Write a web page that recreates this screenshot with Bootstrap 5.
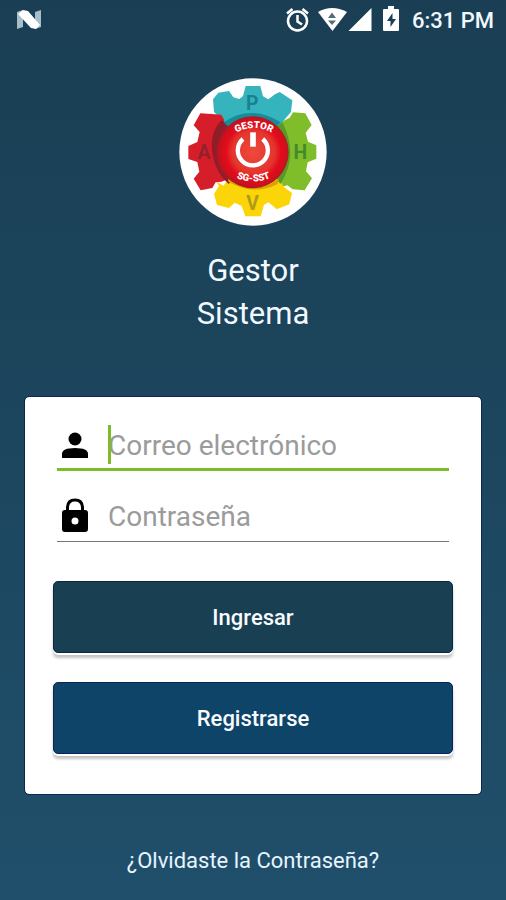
<!DOCTYPE html>
<html lang="es">
<head>
<meta charset="utf-8">
<meta name="viewport" content="width=device-width, initial-scale=1">
<title>Gestor Sistema</title>
<link href="https://cdn.jsdelivr.net/npm/bootstrap@5.3.0/dist/css/bootstrap.min.css" rel="stylesheet">
<style>
body { font-family: Roboto, "Liberation Sans", sans-serif; background: linear-gradient(#1a3f54, #1c465e 50%, #204f6b); color: #f1f8ff; }
.status-bar { height: 40px; padding: 0 12px 0 16px; }
.clock-text { font-size: 22px; font-weight: 500; line-height: 26px; padding-top: 2px; margin-left: 11px; }
.brand { padding-top: 38px; }
.brand-name { font-size: 31px; line-height: 43px; font-weight: 400; margin: 23px 0 0; }
.login-panel { margin: 61px 24px 0; padding: 26px 28px 40px; border: 1px solid #0c2850; border-radius: 5px; background: #fff; background-clip: padding-box; }
.field { margin: 0 4px; height: 48px; border-bottom: 1px solid #777; padding-left: 4px; }
.field-active { border-bottom: 3px solid #7dbb2b; }
.field + .field { margin-top: 23px; }
.field-icon { width: 30px; margin-right: 17px; padding-top: 2px; }
.field-icon svg { display: block; }
.field-input { font-family: inherit; font-size: 28px; line-height: 38px; padding: 4px 0 0; border: 0; outline: 0; background: transparent; width: 100%; min-width: 0; color: #333; caret-color: transparent; }
.field-input::placeholder { color: #9b9b9b; opacity: 1; }
.caret { left: 0; top: 2px; width: 3px; height: 39px; background: #7dbb2b; }
.action { height: 72px; width: 100%; font-size: 22px; font-weight: 500; color: #f8fbff; border: 1px solid #0b2448; border-radius: 5px; box-shadow: 0 2px 0 #fff, 0 5px 3px #c3c3c3; }
.action:hover { color: #fff; }
.action-enter, .action-enter:hover { background: #183f52; border-color: #0b2448; margin-top: 39px; }
.action-register, .action-register:hover { background: #0e4467; border-color: #08245a; margin-top: 29px; }
.forgot { font-size: 22px; line-height: 30px; color: #e6f5ff; padding: 51px 0 24px; }
</style>
<script src="https://cdn.jsdelivr.net/npm/bootstrap@5.3.0/dist/js/bootstrap.bundle.min.js"></script>
</head>
<body class="min-vh-100 d-flex flex-column">
<header class="status-bar d-flex align-items-center justify-content-between">
  <svg width="26" height="22" viewBox="0 0 26 22" aria-hidden="true">
    <path d="M1 3l6-2v17l-6 2zM19 3l6-2v17l-6 2z" fill="#a9bdc8"/>
    <path d="M2 5 7 1l5 1 12 14-4 4-5-1z" fill="#fff"/>
  </svg>
  <div class="d-flex align-items-center">
    <svg width="116" height="28" viewBox="286 6 116 28" aria-hidden="true">
      <g fill="none" stroke="#fff" stroke-width="2.500">
        <circle cx="298.500" cy="21" r="9.500"/>
        <path d="M298.500 15v6.500l4.500 3M288 13.500l5.500-4.500M309 13.500l-5.500-4.500"/>
      </g>
      <path d="M319 12Q333 4 348 12L333.500 31z" fill="#fff"/>
      <path d="M333 12.500l4 5.500h-8zM329 20.500h8l-4 4.500z" fill="#566b78"/>
      <path d="M349.500 31 372.500 8v23z" fill="#fff"/>
      <path d="M389 9V6h6v3h4q1 0 1 1v20q0 1-1 1h-14q-1 0-1-1V10q0-1 1-1z" fill="#fff"/>
      <path d="M393.500 13v6h3.500l-5.500 8v-6H388z" fill="#1a3f54"/>
    </svg>
    <span class="clock-text">6:31 PM</span>
  </div>
</header>

<main>
  <section class="brand text-center">
    <svg class="d-block mx-auto" width="148" height="148" viewBox="30 24 444 444" role="img" aria-label="Gestor SG-SST">
      <defs>
        <radialGradient id="redButton"><stop offset="0" stop-color="#ef493c"/><stop offset=".62" stop-color="#e3352e"/><stop offset=".8" stop-color="#e40b1b"/><stop offset="1" stop-color="#ca111c"/></radialGradient>
        <path id="arcTop" d="M188 196Q254 152 322 196"/>
        <path id="arcBottom" d="M189 317Q253 352 318 317"/>
      </defs>
      <circle cx="252" cy="246" r="221" fill="#fff"/>
      <path d="M160 151 135 126 132 88 148 68 180 63 193 82 211 87 222 78 230 48H274L282 79 298 88 318 73 332 66 370 91 366 126 343 153 336 182H164z" fill="#35b4bd"/>
      <path d="M343 153 362 143 372 127 409 130 428 165 410 188 417 215 442 226V266L416 277 411 304 429 325 407 361 371 358 355 346 338 351 320 325V180z" fill="#80bd2b"/>
      <path d="M142 335 164 347 178 325H329L344 350 369 369 361 403 323 418 299 397 285 404 275 439H229L218 408 197 398 180 414 144 405 135 372 150 348z" fill="#fbd507"/>
      <path d="M157 134 166 150 158 160 184 181V324L158 335 140 337 130 354 95 361 74 326 91 305 85 276 58 267V228L85 216 92 186 74 166 94 130 128 132z" fill="#d51e2a"/>
      <path d="M157 151Q121 190 130 249T179 342L200 320V170z" fill="#911d29"/>
      <path d="M164 157Q247 101 335 157L310 182H190z" fill="#178b98"/>
      <path d="M340 157Q391 255 334 342L310 310V180z" fill="#569b26"/>
      <path d="M178 325Q253 385 330 325L325 343Q253 378 178 335z" fill="#d7a300"/>
      <circle cx="251" cy="247" r="108" fill="#b51624"/>
      <circle cx="253" cy="246" r="103" fill="url(#redButton)"/>
      <path d="M222 207A45 45 0 1 0 281 207" fill="none" stroke="#fff" stroke-width="13"/>
      <path d="M252 187V230" stroke="#fff" stroke-width="17"/>
      <g font-family="Roboto, sans-serif" font-weight="700" text-anchor="middle">
        <g font-size="29" fill="#fff" font-weight="900">
          <text><textPath href="#arcTop" startOffset="50%">GESTOR</textPath></text>
          <text><textPath href="#arcBottom" startOffset="50%">SG-SST</textPath></text>
        </g>
        <g font-size="58">
          <text x="250" y="121" fill="#188293">P</text>
          <text x="105" y="267" fill="#96202a">A</text>
          <text x="394" y="267" fill="#438a2d">H</text>
          <text x="251" y="421" fill="#b29a19">V</text>
        </g>
      </g>
    </svg>
    <h1 class="brand-name">Gestor<br>Sistema</h1>
  </section>

  <form class="login-panel">
    <div class="field field-active d-flex align-items-start">
      <label for="email" class="field-icon" aria-label="Correo electrónico">
        <svg width="30" height="40" viewBox="1 0 30 40" aria-hidden="true"><circle cx="15" cy="14" r="6.500"/><path d="M2 33v-4q0-6 13-6t13 6v4z"/></svg>
      </label>
      <div class="position-relative flex-grow-1">
        <input id="email" class="field-input d-block" type="email" placeholder="Correo electrónico" autocomplete="off">
        <span class="caret position-absolute"></span>
      </div>
    </div>
    <div class="field d-flex align-items-start">
      <label for="password" class="field-icon" aria-label="Contraseña">
        <svg width="30" height="40" viewBox="1 -1 30 40" aria-hidden="true"><path d="M7.500 15V10Q8 3 15 3t7.500 7v5" fill="none" stroke="#000" stroke-width="3"/><path fill-rule="evenodd" d="M5 13h20q3 0 3 3v16q0 3-3 3H5q-3 0-3-3V16q0-3 3-3zM18.500 24a3.500 3.500 0 1 0-7 0a3.500 3.500 0 1 0 7 0"/></svg>
      </label>
      <input id="password" class="field-input d-block flex-grow-1" type="password" placeholder="Contraseña">
    </div>
    <button type="button" class="btn action action-enter">Ingresar</button>
    <button type="button" class="btn action action-register">Registrarse</button>
  </form>
</main>
<footer class="text-center"><a href="#" class="forgot d-block text-decoration-none">¿Olvidaste la Contraseña?</a></footer>
</body>
</html>
